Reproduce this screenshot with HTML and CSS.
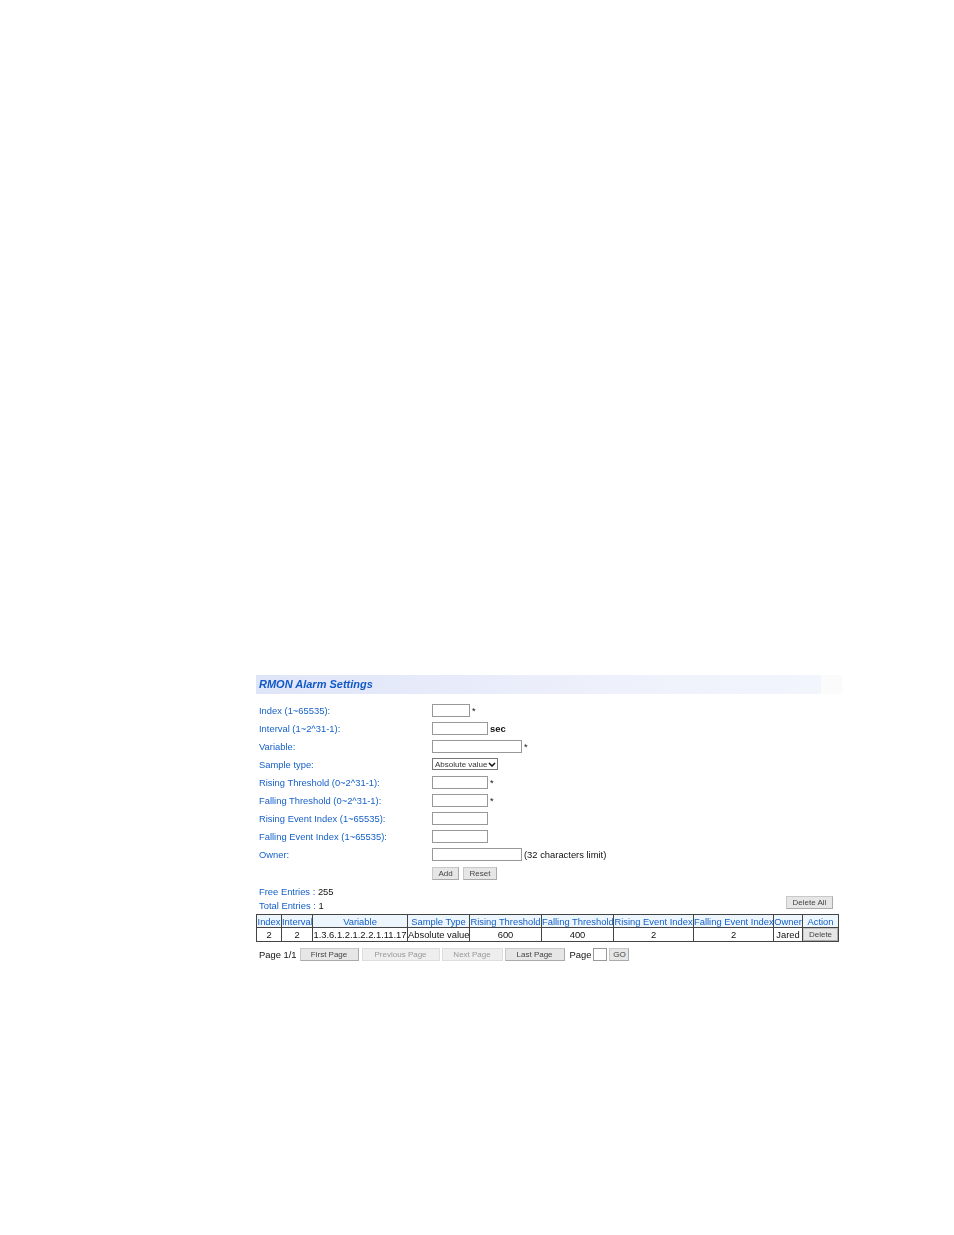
FILE: index.html
```html
<!DOCTYPE html>
<html lang="en">
<head>
    <meta charset="UTF-8">
    <meta name="viewport" content="width=device-width, initial-scale=1.0">
    <title>RMON Alarm Settings</title>
    <link rel="stylesheet" href="styles.css">
</head>
<body>
    <div class="panel">
        <div class="title">RMON Alarm Settings</div>

        <div class="form">
            <div class="row">
                <label>Index (1~65535):</label>
                <input class="short" type="text"><span class="mark">*</span>
            </div>
            <div class="row">
                <label>Interval (1~2^31-1):</label>
                <input class="mid" type="text"><span class="mark bold">sec</span>
            </div>
            <div class="row">
                <label>Variable:</label>
                <input class="long" type="text"><span class="mark">*</span>
            </div>
            <div class="row">
                <label>Sample type:</label>
                <select class="sample"><option>Absolute value</option></select>
            </div>
            <div class="row">
                <label>Rising Threshold (0~2^31-1):</label>
                <input class="mid" type="text"><span class="mark">*</span>
            </div>
            <div class="row">
                <label>Falling Threshold (0~2^31-1):</label>
                <input class="mid" type="text"><span class="mark">*</span>
            </div>
            <div class="row">
                <label>Rising Event Index (1~65535):</label>
                <input class="mid" type="text">
            </div>
            <div class="row">
                <label>Falling Event Index (1~65535):</label>
                <input class="mid" type="text">
            </div>
            <div class="row">
                <label>Owner:</label>
                <input class="long" type="text"><span class="mark">(32 characters limit)</span>
            </div>
            <div class="row actions">
                <button class="btn add">Add</button>
                <button class="btn reset">Reset</button>
            </div>
        </div>

        <div class="summary">
            <div class="counts">
                <div><span class="blue">Free Entries :</span> 255</div>
                <div><span class="blue">Total Entries :</span> 1</div>
            </div>
            <button class="btn delete-all">Delete All</button>
        </div>

        <table class="entries">
            <thead>
                <tr>
                    <th>Index</th>
                    <th>Interval</th>
                    <th>Variable</th>
                    <th>Sample Type</th>
                    <th>Rising Threshold</th>
                    <th>Falling Threshold</th>
                    <th>Rising Event Index</th>
                    <th>Falling Event Index</th>
                    <th>Owner</th>
                    <th>Action</th>
                </tr>
            </thead>
            <tbody>
                <tr>
                    <td>2</td>
                    <td>2</td>
                    <td>1.3.6.1.2.1.2.2.1.11.17</td>
                    <td>Absolute value</td>
                    <td>600</td>
                    <td>400</td>
                    <td>2</td>
                    <td>2</td>
                    <td>Jared</td>
                    <td><button class="btn delete">Delete</button></td>
                </tr>
            </tbody>
        </table>

        <div class="pager">
            <span class="page-label">Page 1/1</span>
            <button class="btn first">First Page</button>
            <button class="btn prev" disabled>Previous Page</button>
            <button class="btn next" disabled>Next Page</button>
            <button class="btn last">Last Page</button>
            <span class="page-label goto">Page</span>
            <input class="page-input" type="text">
            <button class="btn go">GO</button>
        </div>
    </div>
</body>
</html>
```

FILE: styles.css
```css
body {
    font-family: "Liberation Sans", Arial, sans-serif;
    font-size: 9.4px;
    margin: 0;
    padding: 675px 0 0 256px;
    background-color: #fff;
    color: #111;
}

/* the reference is a soft scan, so everything is a little blurred */
.panel {
    width: 586px;
    filter: blur(0.45px);
}

.title {
    height: 19px;
    line-height: 18px;
    padding-left: 3px;
    font-size: 11px;
    font-weight: bold;
    font-style: italic;
    color: #1259c8;
    background: linear-gradient(to right, #dfe5f8, #eef0fb 60%, #f3f5fd 96.5%, #fbfbfb 96.5%);
}

.form {
    margin-top: 7px;
    padding-left: 3px;
}

.row {
    display: flex;
    align-items: center;
    height: 18px;
}

.row label {
    width: 173px;
    flex: none;
    color: #1560c8;
}

input {
    box-sizing: border-box;
    height: 13px;
    margin: 0;
    padding: 0;
    border: 1px solid #999;
    background-color: #fff;
}

.short {
    width: 38px;
}

.mid {
    width: 56px;
}

.long {
    width: 90px;
}

.mark {
    margin-left: 2px;
}

.bold {
    font-weight: bold;
}

.sample {
    appearance: none;
    box-sizing: border-box;
    width: 66px;
    height: 12px;
    padding: 0 0 0 2px;
    font-family: inherit;
    font-size: 8px;
    color: #333;
    border: 1px solid #777;
    border-radius: 0;
    background: #fff url("data:image/svg+xml,%3Csvg xmlns='http://www.w3.org/2000/svg' width='8' height='5'%3E%3Cpath d='M1 1l3 3 3-3' fill='none' stroke='%23111' stroke-width='1.5'/%3E%3C/svg%3E") no-repeat right 1px center;
}

.btn {
    box-sizing: border-box;
    height: 13px;
    padding: 0;
    font-family: inherit;
    font-size: 8px;
    color: #444;
    border: 1px solid #c8c8c8;
    border-right-color: #aaa;
    border-bottom-color: #aaa;
    background-color: #e6e6e6;
}

.btn:disabled {
    color: #999;
    background-color: #eee;
    border-color: #ddd;
}

.actions {
    padding-left: 173px;
    padding-top: 2px;
    box-sizing: border-box;
    gap: 4px;
}

.add {
    width: 27px;
}

.reset {
    width: 34px;
}

.summary {
    display: flex;
    justify-content: space-between;
    align-items: flex-end;
    margin-top: 3px;
    padding-left: 3px;
    width: 574px;
    height: 29px;
}

.counts div {
    height: 14px;
    line-height: 14px;
}

.blue {
    color: #1560c8;
}

.delete-all {
    width: 47px;
    margin-bottom: 4px;
}

.entries {
    table-layout: fixed;
    border-collapse: collapse;
    width: 583px;
    margin-top: 1px;
}

.entries th,
.entries td {
    padding: 0;
    border: 1px solid #444;
    text-align: center;
    white-space: nowrap;
    overflow: hidden;
}

.entries th {
    height: 12px;
    font-weight: normal;
    color: #1560c8;
    background-color: #eef6fd;
}

.entries td {
    height: 13px;
    color: #111;
}

.entries th:nth-child(1) { width: 24px; }
.entries th:nth-child(2) { width: 30px; }
.entries th:nth-child(3) { width: 94px; }
.entries th:nth-child(4) { width: 61px; }
.entries th:nth-child(5) { width: 71px; }
.entries th:nth-child(6) { width: 71px; }
.entries th:nth-child(7) { width: 79px; }
.entries th:nth-child(8) { width: 79px; }
.entries th:nth-child(9) { width: 28px; }

.delete {
    display: block;
    width: 100%;
    height: 13px;
}

.pager {
    display: flex;
    align-items: center;
    height: 14px;
    margin-top: 5px;
    padding-left: 3px;
}

.first {
    width: 59px;
    margin-left: 3px;
}

.prev {
    width: 78px;
    margin-left: 3px;
}

.next {
    width: 61px;
    margin-left: 2px;
}

.last {
    width: 60px;
    margin-left: 2px;
}

.goto {
    margin-left: 5px;
}

.page-input {
    width: 14px;
    height: 13px;
    margin-left: 2px;
}

.go {
    width: 20px;
    margin-left: 2px;
}
```
